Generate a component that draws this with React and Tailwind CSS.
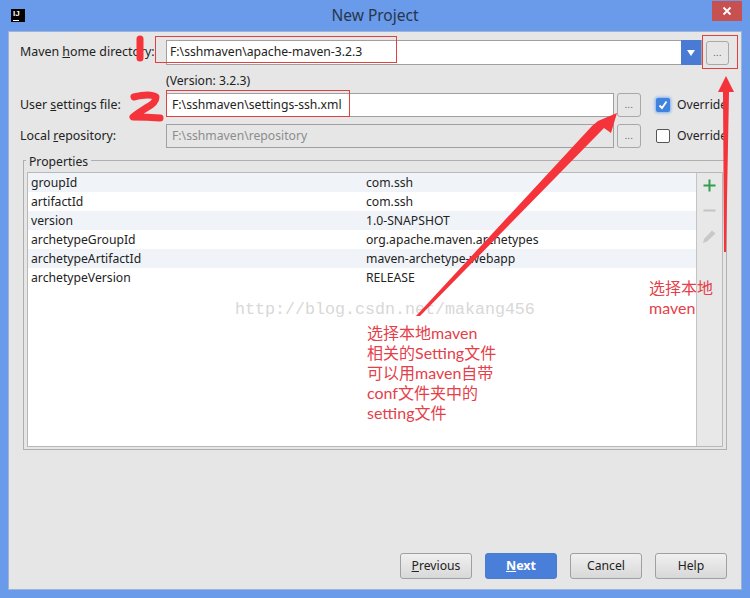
const rows = [
  ['groupId', 'com.ssh'],
  ['artifactId', 'com.ssh'],
  ['version', '1.0-SNAPSHOT'],
  ['archetypeGroupId', 'org.apache.maven.archetypes'],
  ['archetypeArtifactId', 'maven-archetype-webapp'],
  ['archetypeVersion', 'RELEASE'],
];

const note = ['选择本地maven', '相关的Setting文件', '可以用maven自带', 'conf文件夹中的', 'setting文件'];

function Dots({ className }) {
  return (
    <button className={`flex shrink-0 items-center justify-center rounded-[3px] border border-[#a8a8a8] bg-[#e6e6e6] text-[9px] leading-none tracking-[0.5px] text-[#555] ${className}`}>
      <span className="-mt-[1px]">...</span>
    </button>
  );
}

function Label({ children }) {
  return <div className="w-[146px] shrink-0 whitespace-nowrap text-[12.4px] text-[#222]">{children}</div>;
}

function Btn({ children, primary }) {
  return (
    <button
      className={
        primary
          ? 'h-[26px] w-[72px] rounded-[3px] border border-[#4b7ccc] bg-[#4a7fd9] text-[12.5px] font-bold text-white'
          : 'h-[26px] w-[72px] rounded-[3px] border border-[#a0a0a0] bg-gradient-to-b from-[#f0f0f0] to-[#d8d8d8] text-[12.2px] text-[#222]'
      }
    >
      {children}
    </button>
  );
}

export default function App() {
  return (
    <div className="relative flex h-[598px] w-[750px] flex-col overflow-hidden bg-[#6a9bea] font-['Noto_Sans','Noto_Sans_CJK_SC',sans-serif]">
      {/* title bar */}
      <div className="relative flex h-[31px] shrink-0 items-center justify-center">
        <div className="absolute left-[11px] top-[9px] h-[13px] w-[14px] bg-black pl-[2px] font-['Liberation_Sans',sans-serif] text-[8px] font-bold leading-[9px] text-white">
          IJ
          <div className="absolute bottom-[1px] left-[2px] h-[1px] w-[6px] bg-white" />
        </div>
        <div className="text-[15.5px] text-[#26364d]">New Project</div>
        <div className="absolute right-[8px] top-[1px] flex h-[20px] w-[30px] items-center justify-center bg-[#c75050]">
          <svg width="10" height="10" viewBox="0 0 10 10">
            <path d="M1.5 1.5 L8.5 8.5 M8.5 1.5 L1.5 8.5" stroke="#fff" strokeWidth="1.8" />
          </svg>
        </div>
      </div>

      {/* dialog body */}
      <div className="mx-[8px] mb-[8px] flex flex-1 flex-col border border-[#9db4d8] bg-[#e6e6e6] pl-[11px] pr-[12px] pt-[8px]">
        <div className="flex h-[25px] items-center">
          <Label>Maven <span className="underline">h</span>ome directory:</Label>
          <div className="flex h-[25px] w-[536px] items-center border border-[#a0a0a0] bg-white pl-[3px] text-[12.2px] text-[#222]">
            <span className="flex-1">F:\sshmaven\apache-maven-3.2.3</span>
            <div className="flex h-[25px] w-[20px] items-center justify-center bg-[#4a7bd4]">
              <div className="h-0 w-0 border-x-[4px] border-t-[6px] border-x-transparent border-t-white" />
            </div>
          </div>
          <Dots className="ml-[4px] h-[24px] w-[23px]" />
        </div>

        <div className="ml-[146px] mt-[6px] h-[22px] text-[12.2px] leading-[20px] text-[#222]">(Version: 3.2.3)</div>

        <div className="flex h-[24px] items-center">
          <Label>User <span className="underline">s</span>ettings file:</Label>
          <div className="flex h-[24px] w-[448px] items-center border border-[#a0a0a0] bg-white pl-[5px] text-[12.2px] text-[#222]">F:\sshmaven\settings-ssh.xml</div>
          <Dots className="ml-[3px] h-[24px] w-[24px]" />
          <div className="ml-[15px] flex h-[14px] w-[14px] items-center justify-center rounded-[2px] bg-[#3f82e0] shadow-[0_0_3px_1px_#7fb0f0]">
            <svg width="10" height="10" viewBox="0 0 10 10">
              <path d="M1.5 5.5 L4 8 L8.5 1.5" fill="none" stroke="#fff" strokeWidth="1.8" />
            </svg>
          </div>
          <span className="ml-[7px] text-[12.2px] text-[#222]">Override</span>
        </div>

        <div className="mt-[7px] flex h-[24px] items-center">
          <Label>Local <span className="underline">r</span>epository:</Label>
          <div className="flex h-[24px] w-[448px] items-center border border-[#a0a0a0] bg-[#e6e6e6] pl-[5px] text-[12.2px] text-[#8c8c8c]">F:\sshmaven\repository</div>
          <Dots className="ml-[3px] h-[24px] w-[24px]" />
          <div className="ml-[15px] h-[14px] w-[14px] rounded-[2px] border border-[#555] bg-white" />
          <span className="ml-[7px] text-[12.2px] text-[#222]">Override</span>
        </div>

        {/* properties group */}
        <div className="relative ml-[3px] mt-[12px] h-[290px] w-[704px] border border-[#b0b0b0] px-[3px] pb-[2px] pt-[11px]">
          <div className="absolute -top-[7px] left-[2px] bg-[#e6e6e6] px-[3px] text-[12.2px] leading-[15px] text-[#222]">Properties</div>
          <div className="flex h-[275px] border border-[#b8b8b8] bg-white">
            <div className="flex-1">
              {rows.map((row, i) => (
                <div key={row[0]} className={`flex h-[19px] items-center pl-[3px] pt-[1px] text-[12.2px] text-[#222] ${i % 2 === 0 ? 'bg-[#f0f4f8]' : 'bg-white'}`}>
                  <span className="w-[335px]">{row[0]}</span>
                  <span>{row[1]}</span>
                </div>
              ))}
            </div>
            <div className="flex w-[26px] flex-col items-center gap-[12px] border-l border-[#c4c4c4] bg-[#e8e8e8] pt-[6px]">
              <svg width="13" height="13" viewBox="0 0 13 13">
                <path d="M6.5 0.5 V12.5 M0.5 6.5 H12.5" stroke="#2f9e4f" strokeWidth="2" />
              </svg>
              <svg width="13" height="13" viewBox="0 0 13 13">
                <path d="M0.5 6.5 H12.5" stroke="#c4c4c4" strokeWidth="2" />
              </svg>
              <svg width="15" height="15" viewBox="0 0 15 15">
                <path d="M1 14 L2 10 L10 1.5 L13.5 4.5 L5 12.5 Z" fill="#c8c8c8" />
              </svg>
            </div>
          </div>
        </div>

        {/* footer buttons */}
        <div className="mt-auto mb-[10px] flex justify-end gap-[13px] pr-[2px]">
          <Btn><span className="underline">P</span>revious</Btn>
          <Btn primary><span className="underline">N</span>ext</Btn>
          <Btn>Cancel</Btn>
          <Btn>Help</Btn>
        </div>
      </div>

      {/* blog watermark */}
      <div className="absolute left-[235px] top-[299px] whitespace-nowrap font-['Liberation_Mono',monospace] text-[16.67px] leading-[22px] text-[#d8d8d8]">http://blog.csdn.net/makang456</div>

      {/* red boxes */}
      <div className="absolute left-[155px] top-[36px] h-[27px] w-[242px] border border-[#e04040]" />
      <div className="absolute left-[166px] top-[90px] h-[27px] w-[184px] border border-[#e04040]" />
      <div className="absolute left-[702px] top-[35px] h-[34px] w-[36px] border border-[#e04040]" />

      {/* hand drawn numbers and arrows */}
      <svg className="absolute left-0 top-0" width="750" height="598" viewBox="0 0 750 598">
        <path d="M140 39 V58" stroke="#f5333a" strokeWidth="7" strokeLinecap="round" fill="none" />
        <path d="M134 97 Q150 93 156 97 Q156 103 146 108 Q138 113 133 117 Q148 117 160 118" stroke="#f5333a" strokeWidth="7" strokeLinecap="round" strokeLinejoin="round" fill="none" />
        <path d="M416 316 L592 126 L598 121 L617 113 L611 133 L604 128 L420 316 Z" fill="#f5333a" />
        <path d="M724 252 L723 92 L718 92 L726 76 L734 92 L729 92 L726 252 Z" fill="#f5333a" />
      </svg>

      {/* red notes */}
      <div className="absolute left-[367px] top-[323px] whitespace-nowrap font-['Lato','Noto_Sans_CJK_SC',sans-serif] text-[16px] leading-[20px] text-[#e5404a]">
        {note.map((line) => <div key={line}>{line}</div>)}
      </div>
      <div className="absolute left-[649px] top-[278px] whitespace-nowrap font-['Lato','Noto_Sans_CJK_SC',sans-serif] text-[16px] leading-[20px] text-[#e5404a]">
        <div>选择本地</div>
        <div>maven</div>
      </div>
    </div>
  );
}
